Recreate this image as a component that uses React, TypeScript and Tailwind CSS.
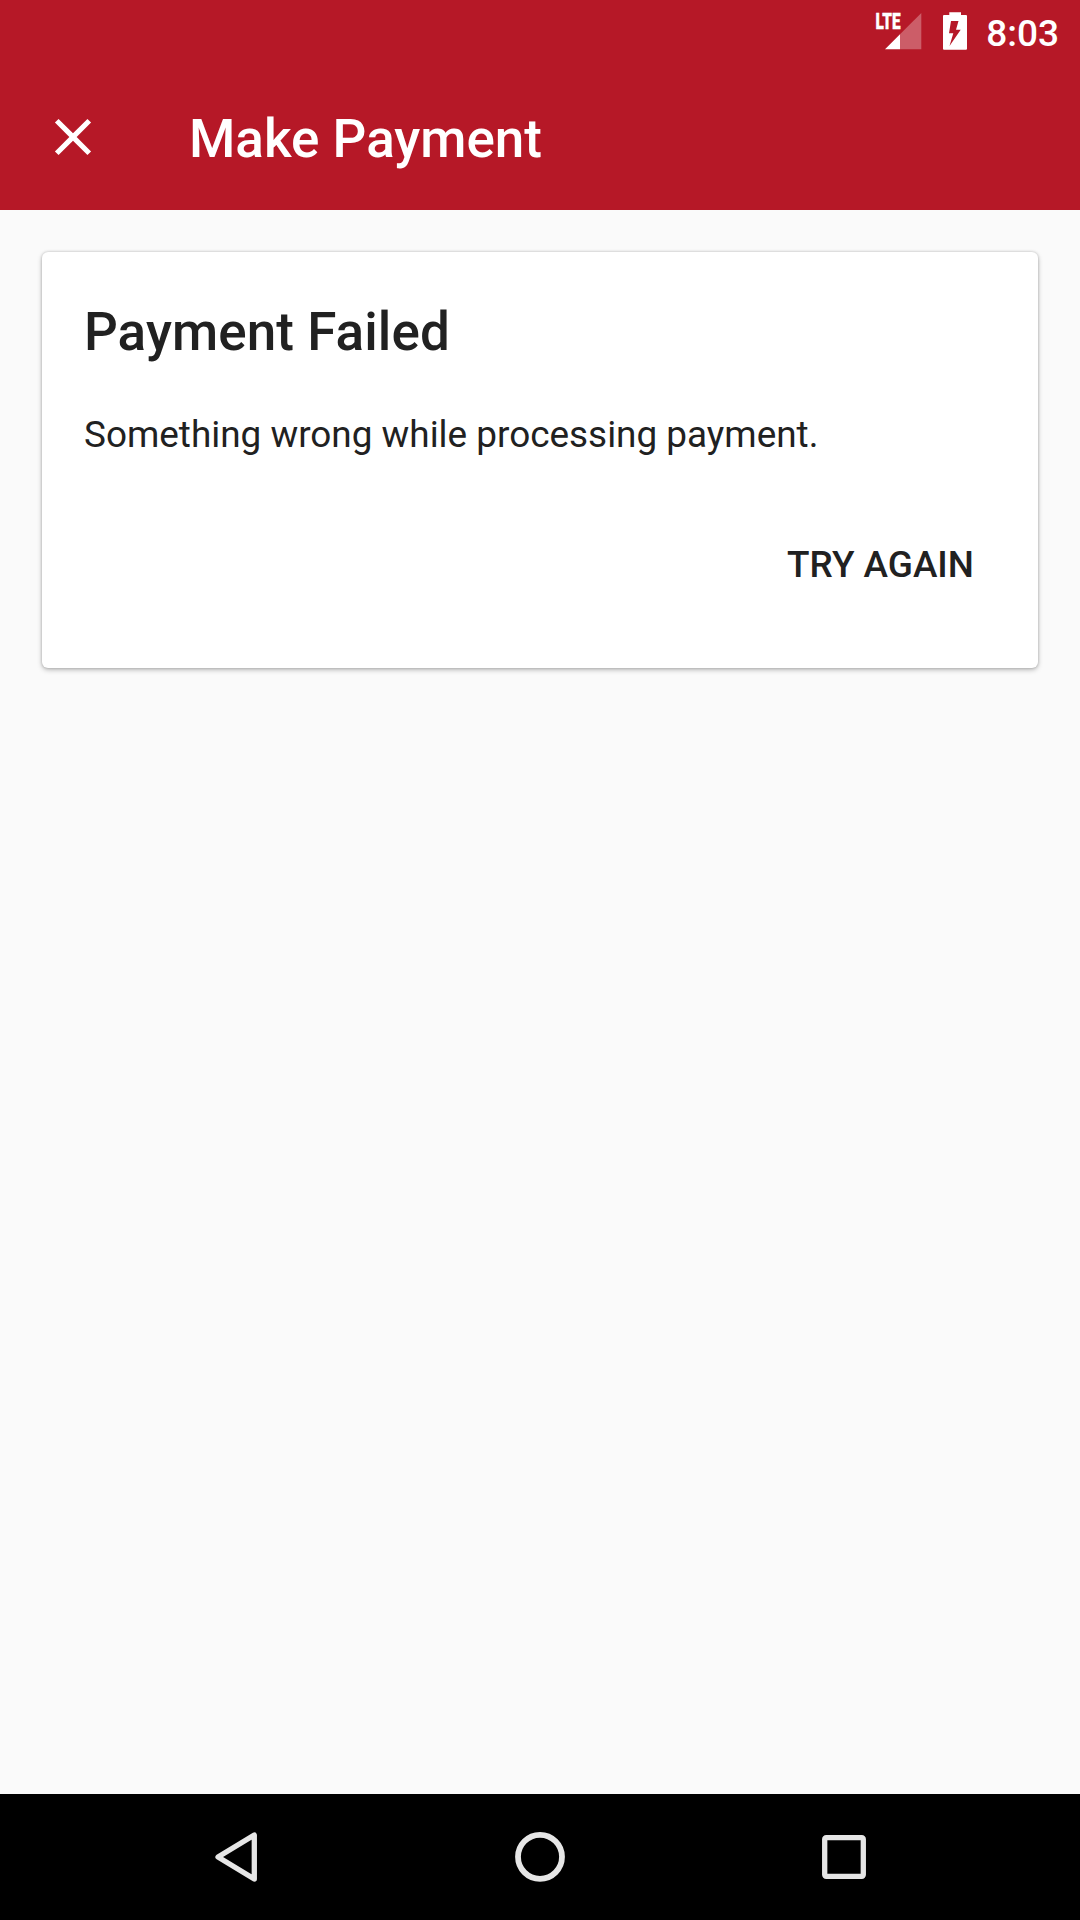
export default function App() {
  return (
    <div className="flex h-[1920px] w-[1080px] flex-col overflow-hidden bg-[#fafafa] font-[Roboto,sans-serif] text-[#212121]">
      <header className="flex h-[210px] flex-col bg-[#b61827] text-white">
        <div className="flex h-[63px] items-center justify-end pr-[21px]">
          <svg className="h-[63px] w-[60px]" viewBox="868 0 60 63" fill="#fff">
            <path d="M921.300 13V49.300H900V34.300Z" fillOpacity=".3" />
            <path d="M900 34.300V49.300H885Z" />
            <text x="875.500" y="29.300" fontSize="22" fontWeight="900" textLength="25" lengthAdjust="spacingAndGlyphs" stroke="#fff" strokeWidth=".4">LTE</text>
          </svg>
          <svg className="h-[63px] w-[58px]" viewBox="928 0 58 63" fill="#fff">
            <path fillRule="evenodd" d="M949.300 12.300h11.700v2.700h5q1 0 1 1v32.700q0 1-1 1h-22q-1 0-1-1V16q0-1 1-1h5.300zM951 21L949 33.300H953.300L949.500 46L960.700 29.700H956L958.500 21Z" />
          </svg>
          <span className="pt-[5px] text-[37px] font-medium leading-[58px]">8:03</span>
        </div>
        <div className="flex h-[147px] items-center">
          <svg className="ml-[42px] h-[62px] w-[62px]" viewBox="0 0 24 24" fill="#fff">
            <path d="M19 6.410L17.590 5 12 10.590 6.410 5 5 6.410 10.590 12 5 17.590 6.410 19 12 13.410 17.590 19 19 17.590 13.410 12z" />
          </svg>
          <h1 className="ml-[85px] pt-[7px] text-[53px] font-medium">Make Payment</h1>
        </div>
      </header>
      <main className="flex-1 p-[42px]">
        <section className="flex h-[416px] flex-col rounded-[6px] bg-white px-[42px] pt-[42px] shadow-[0_2px_5px_rgba(0,0,0,0.25),0_0_3px_rgba(0,0,0,0.2)]">
          <h2 className="text-[53px] font-medium leading-[76px] tracking-[0.08px]">Payment Failed</h2>
          <p className="mt-[40px] text-[36.900px] leading-[50px]">Something wrong while processing payment.</p>
          <button className="mr-[22px] mt-[80px] self-end text-[36.900px] font-medium leading-[50px]">TRY AGAIN</button>
        </section>
      </main>
      <nav className="h-[126px] bg-black">
        <svg className="h-[126px] w-[1080px]" viewBox="0 0 1080 126" fill="none" stroke="#e6e6e6" strokeWidth="5.300">
          <path d="M254.300 41V85L218 63Z" strokeLinejoin="round" />
          <circle cx="540" cy="62.800" r="22" strokeWidth="5.800" />
          <rect x="824.700" y="43.700" width="38.600" height="38.600" rx="1.500" />
        </svg>
      </nav>
    </div>
  );
}
